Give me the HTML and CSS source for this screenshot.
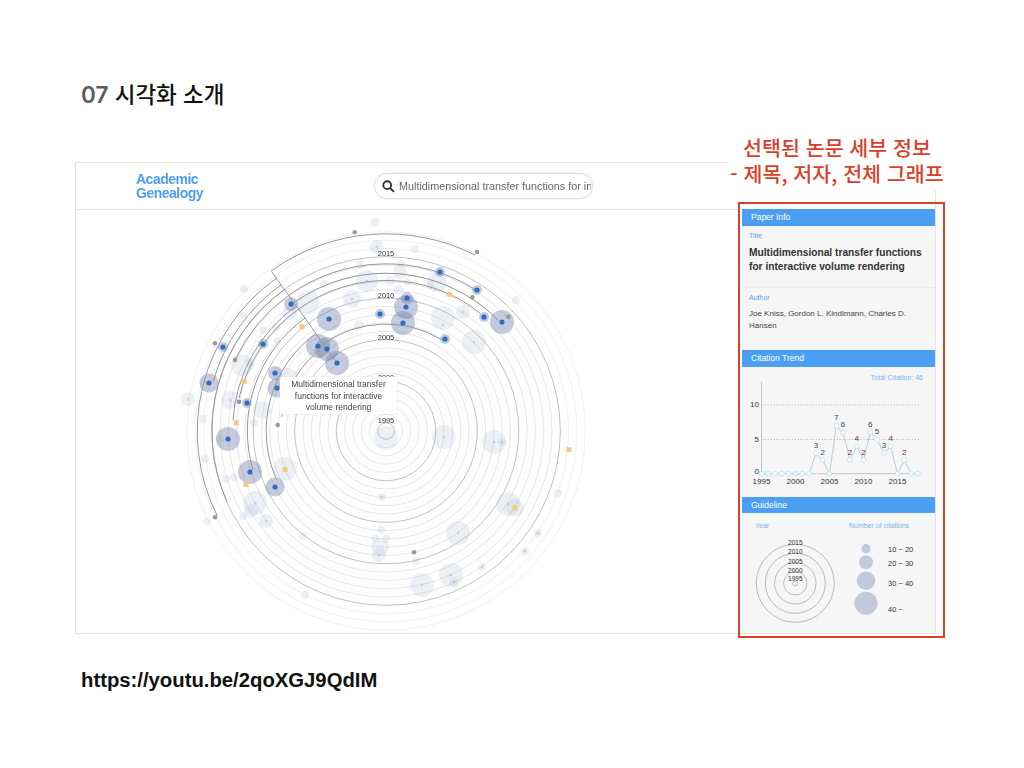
FILE: index.html
```html
<!DOCTYPE html>
<html lang="ko">
<head>
<meta charset="utf-8">
<title>07 시각화 소개</title>
<link rel="stylesheet" href="styles.css">
</head>
<body>
<div class="slide">
  <h1 class="heading"><span class="num">07</span> 시각화 소개</h1>
  <div class="card">
    <div class="left">
      <header class="topbar">
        <div class="logo">Academic<br>Genealogy</div>
        <div class="search">
          <svg class="search-icon" viewBox="0 0 14 14"><circle cx="5.6" cy="5.6" r="4.2"/><path d="M8.8 8.8L12.8 12.8"/></svg>
          <span class="search-text">Multidimensional transfer functions for interactive volume rendering</span>
        </div>
      </header>
      <div class="viz">
        <svg class="viz-svg" viewBox="76 210 664 423" width="664" height="423">
          <g class="ring-faint">
            <circle cx="386" cy="431" r="182.6"/><circle cx="386" cy="431" r="190.9"/><circle cx="386" cy="431" r="199.2"/>
          </g>
          <g class="ring">
            <circle cx="386" cy="431" r="16.6"/><circle cx="386" cy="431" r="24.9"/><circle cx="386" cy="431" r="33.2"/><circle cx="386" cy="431" r="41.5"/>
            <circle cx="386" cy="431" r="58.1"/><circle cx="386" cy="431" r="66.4"/><circle cx="386" cy="431" r="74.7"/><circle cx="386" cy="431" r="83"/>
            <circle cx="386" cy="431" r="99.6"/><circle cx="386" cy="431" r="107.9"/><circle cx="386" cy="431" r="116.2"/><circle cx="386" cy="431" r="124.5"/>
            <circle cx="386" cy="431" r="141.1"/><circle cx="386" cy="431" r="149.4"/><circle cx="386" cy="431" r="157.7"/><circle cx="386" cy="431" r="166"/>
          </g>
          <g class="ring-major">
            <circle cx="386" cy="431" r="8.3"/><circle cx="386" cy="431" r="49.8"/><circle cx="386" cy="431" r="91.3"/><circle cx="386" cy="431" r="132.8"/><circle cx="386" cy="431" r="174.3"/>
          </g>
          <g class="halo-light">
            <circle cx="375" cy="222" r="4.5"/><circle cx="377" cy="247" r="7"/><circle cx="244" cy="289" r="4"/><circle cx="360" cy="265" r="4"/><circle cx="367" cy="281" r="11"/><circle cx="324" cy="284" r="4"/><circle cx="352" cy="299" r="9"/><circle cx="308" cy="302" r="12"/><circle cx="290" cy="313" r="7"/><circle cx="243" cy="315" r="3.5"/><circle cx="263" cy="330" r="4"/><circle cx="276" cy="327" r="4"/><circle cx="359" cy="325" r="5"/><circle cx="277" cy="341" r="3.5"/><circle cx="242" cy="365" r="11"/><circle cx="250" cy="363" r="5"/><circle cx="287" cy="380" r="12"/><circle cx="188" cy="399" r="7"/><circle cx="230" cy="400" r="9"/><circle cx="262" cy="410" r="9"/><circle cx="203" cy="419" r="4"/>
            <circle cx="415" cy="249" r="4"/><circle cx="401" cy="263" r="4"/><circle cx="400" cy="272" r="7"/><circle cx="390" cy="281" r="5"/><circle cx="408" cy="282" r="4"/><circle cx="399" cy="290" r="5"/><circle cx="430" cy="285" r="4"/><circle cx="437" cy="282" r="10"/><circle cx="516" cy="300" r="4"/><circle cx="463" cy="312" r="7"/><circle cx="443" cy="318" r="12"/><circle cx="474" cy="342" r="12"/>
            <circle cx="220" cy="439" r="4"/><circle cx="254" cy="423" r="4"/><circle cx="205" cy="459" r="4"/><circle cx="285" cy="469" r="12"/><circle cx="234" cy="477" r="4"/><circle cx="226" cy="479" r="4"/><circle cx="255" cy="503" r="12"/><circle cx="251" cy="511" r="7"/><circle cx="243" cy="516" r="4"/><circle cx="266" cy="521" r="7"/><circle cx="207" cy="521" r="4"/><circle cx="303" cy="536" r="4"/><circle cx="305" cy="595" r="4"/><circle cx="382" cy="497" r="4"/><circle cx="381" cy="530" r="4"/><circle cx="375" cy="538" r="4"/><circle cx="386" cy="539" r="4"/><circle cx="380" cy="547" r="9"/><circle cx="379" cy="555" r="7"/>
            <circle cx="386" cy="438" r="12"/><circle cx="444" cy="437" r="12"/><circle cx="494" cy="442" r="12"/><circle cx="502" cy="442" r="4"/><circle cx="508" cy="504" r="12"/><circle cx="515" cy="508" r="9"/><circle cx="558" cy="493" r="4"/><circle cx="538" cy="533" r="4"/><circle cx="525" cy="551" r="4"/><circle cx="482" cy="567" r="4"/><circle cx="458" cy="533" r="12"/><circle cx="416" cy="561" r="4"/><circle cx="451" cy="575" r="12"/><circle cx="454" cy="582" r="4.5"/><circle cx="422" cy="585" r="12"/>
          </g>
          <g class="dot-light">
            <circle cx="377" cy="247" r="1.5"/><circle cx="367" cy="281" r="1.5"/><circle cx="352" cy="299" r="1.5"/><circle cx="443" cy="325" r="1.5"/><circle cx="474" cy="342" r="1.5"/><circle cx="463" cy="312" r="1.5"/><circle cx="188" cy="399" r="1.5"/><circle cx="230" cy="400" r="1.5"/><circle cx="255" cy="503" r="1.5"/><circle cx="266" cy="521" r="1.5"/><circle cx="382" cy="497" r="1.5"/><circle cx="444" cy="437" r="1.5"/><circle cx="494" cy="442" r="1.5"/><circle cx="502" cy="442" r="1.5"/><circle cx="508" cy="504" r="1.5"/><circle cx="458" cy="533" r="1.5"/><circle cx="451" cy="575" r="1.5"/><circle cx="454" cy="582" r="1.5"/><circle cx="422" cy="585" r="1.5"/><circle cx="379" cy="555" r="1.5"/><circle cx="538" cy="533" r="1.5"/><circle cx="525" cy="551" r="1.5"/><circle cx="482" cy="567" r="1.5"/>
          </g>
          <g class="halo-dark">
            <circle cx="291" cy="304" r="7"/><circle cx="329" cy="319" r="12"/><circle cx="318" cy="346" r="12"/><circle cx="327" cy="349" r="12"/><circle cx="337" cy="363" r="12"/><circle cx="380" cy="314" r="5"/><circle cx="223" cy="347" r="5"/><circle cx="263" cy="344" r="5"/><circle cx="275" cy="373" r="7"/><circle cx="277" cy="388" r="9.5"/><circle cx="209" cy="383" r="9.5"/><circle cx="247" cy="403" r="5"/>
            <circle cx="440" cy="272" r="5"/><circle cx="477" cy="290" r="5"/><circle cx="407" cy="298" r="6"/><circle cx="406" cy="307" r="12"/><circle cx="403" cy="323" r="12"/><circle cx="484" cy="317" r="5"/><circle cx="502" cy="322" r="12"/><circle cx="445" cy="339" r="5"/>
            <circle cx="228" cy="439" r="12"/><circle cx="250" cy="472" r="12"/><circle cx="275" cy="487" r="9.5"/>
          </g>
          <g class="arc">
            <path d="M271.2 270.9A197 197 0 0 1 475 255"/>
            <path d="M276.5 278.2A188 188 0 0 0 217.3 516"/>
            <path d="M281.1 284.7A180 180 0 0 0 213 382"/>
            <path d="M284.6 289.6A174 174 0 0 0 227 501.7"/>
            <path d="M288.7 295.3A167 167 0 0 0 235 360"/>
            <path d="M296.3 305.8A154 154 0 0 0 233 420"/>
            <path d="M298.6 309.1A150 150 0 0 0 239 398"/>
            <path d="M305 318A139 139 0 0 0 253 470"/>
            <path d="M316 333.5A120 120 0 0 0 276.7 480"/>
            <path d="M324.8 345.7A105 105 0 0 0 281.7 416.7"/>
            <path d="M288.7 295.3A167 167 0 0 1 476 290"/>
            <path d="M294 302.6A158 158 0 0 1 498 320"/>
            <path d="M298.6 309.1A150 150 0 0 1 480 313"/>
            <path d="M323.7 344A107 107 0 0 1 441 339.4"/>
            <path d="M271.7 271.7L337 363"/>
          </g>
          <g class="dot-grey">
            <circle cx="354.7" cy="232.3" r="2.3"/><circle cx="477" cy="252" r="2.3"/><circle cx="215" cy="343.3" r="2.3"/><circle cx="235" cy="360" r="2.3"/><circle cx="239" cy="401.7" r="2.3"/><circle cx="277.7" cy="425" r="2.3"/><circle cx="215" cy="517.3" r="2.3"/><circle cx="472.3" cy="297.3" r="2.3"/><circle cx="508.3" cy="316.7" r="2.3"/><circle cx="414" cy="552.3" r="2.3"/>
          </g>
          <g class="square">
            <rect x="299.5" y="324.2" width="5" height="5"/><rect x="241.8" y="379.2" width="5" height="5"/><rect x="447.2" y="291.8" width="5" height="5"/><rect x="233.8" y="420.2" width="5" height="5"/><rect x="282.5" y="466.8" width="5" height="5"/><rect x="243.5" y="481.8" width="5" height="5"/><rect x="512.5" y="505.2" width="5" height="5"/><rect x="566.5" y="447.2" width="5" height="5"/>
          </g>
          <g class="dot-dark">
            <circle cx="291" cy="304" r="2.6"/><circle cx="329" cy="319" r="2.6"/><circle cx="318" cy="346" r="2.6"/><circle cx="327" cy="349" r="2.6"/><circle cx="337" cy="363" r="2.6"/><circle cx="380" cy="314" r="2.6"/><circle cx="223" cy="347" r="2.6"/><circle cx="263" cy="344" r="2.6"/><circle cx="275" cy="373" r="2.6"/><circle cx="277" cy="388" r="2.6"/><circle cx="209" cy="383" r="2.6"/><circle cx="247" cy="403" r="2.6"/>
            <circle cx="440" cy="272" r="2.6"/><circle cx="477" cy="290" r="2.6"/><circle cx="407" cy="298" r="2.6"/><circle cx="406" cy="307" r="2.6"/><circle cx="403" cy="323" r="2.6"/><circle cx="484" cy="317" r="2.6"/><circle cx="502" cy="322" r="2.6"/><circle cx="445" cy="339" r="2.6"/>
            <circle cx="228" cy="439" r="2.6"/><circle cx="250" cy="472" r="2.6"/><circle cx="275" cy="487" r="2.6"/>
          </g>
          <g class="year">
            <text x="386" y="255.5">2015</text><text x="386" y="297.5">2010</text><text x="386" y="339.5">2005</text><text x="386" y="380">2000</text><text x="386" y="422.5">1995</text>
          </g>
        </svg>
        <div class="tip">Multidimensional transfer functions for interactive volume rendering</div>
      </div>
    </div>
    <aside class="side">
      <div class="bar">Paper Info</div>
      <div class="info info-title">
        <div class="tag">Title</div>
        <div class="paper-title">Multidimensional transfer functions for interactive volume rendering</div>
      </div>
      <div class="info info-author">
        <div class="tag">Author</div>
        <div class="authors">Joe Kniss, Gordon L. Kindlmann, Charles D. Hansen</div>
      </div>
      <div class="bar">Citation Trend</div>
      <svg class="chart" viewBox="742 367 193 130" width="193" height="130">
        <text class="total" x="923" y="380">Total Citation: 46</text>
        <path class="grid" d="M761.5 405H920M761.5 439.5H920"/>
        <path class="axis" d="M761.5 382V473.7H920"/>
        <g class="tick">
          <text x="759" y="406.5">10</text><text x="759" y="441.5">5</text><text x="759" y="474">0</text>
        </g>
        <g class="xtick">
          <text x="761.5" y="484">1995</text><text x="795.5" y="484">2000</text><text x="829.5" y="484">2005</text><text x="863.5" y="484">2010</text><text x="897.5" y="484">2015</text>
        </g>
        <polyline class="line" points="809.1,473.7 815.9,453.2 822.7,460 829.5,473.7 836.3,425.8 843.1,432.6 849.9,460 856.7,446.3 863.5,460 870.3,432.6 877.1,439.5 883.9,453.2 890.7,446.3 897.5,473.7 904.3,460 911.1,473.7 917.9,473.7"/>
        <g class="pt">
          <circle cx="761.5" cy="473.7" r="2.4"/><circle cx="768.3" cy="473.7" r="2.4"/><circle cx="775.1" cy="473.7" r="2.4"/><circle cx="781.9" cy="473.7" r="2.4"/><circle cx="788.7" cy="473.7" r="2.4"/><circle cx="795.5" cy="473.7" r="2.4"/><circle cx="802.3" cy="473.7" r="2.4"/><circle cx="809.1" cy="473.7" r="2.4"/><circle cx="815.9" cy="453.2" r="2.4"/><circle cx="822.7" cy="460" r="2.4"/><circle cx="829.5" cy="473.7" r="2.4"/><circle cx="836.3" cy="425.8" r="2.4"/><circle cx="843.1" cy="432.6" r="2.4"/><circle cx="849.9" cy="460" r="2.4"/><circle cx="856.7" cy="446.3" r="2.4"/><circle cx="863.5" cy="460" r="2.4"/><circle cx="870.3" cy="432.6" r="2.4"/><circle cx="877.1" cy="439.5" r="2.4"/><circle cx="883.9" cy="453.2" r="2.4"/><circle cx="890.7" cy="446.3" r="2.4"/><circle cx="897.5" cy="473.7" r="2.4"/><circle cx="904.3" cy="460" r="2.4"/><circle cx="911.1" cy="473.7" r="2.4"/><circle cx="917.9" cy="473.7" r="2.4"/>
        </g>
        <g class="val">
          <text x="815.9" y="447.5">3</text><text x="822.7" y="454.5">2</text><text x="836.3" y="420">7</text><text x="843.1" y="427">6</text><text x="849.9" y="454.5">2</text><text x="856.7" y="440.5">4</text><text x="863.5" y="454.5">2</text><text x="870.3" y="427">6</text><text x="877.1" y="434">5</text><text x="883.9" y="447.5">3</text><text x="890.7" y="440.5">4</text><text x="904.3" y="454.5">2</text>
        </g>
      </svg>
      <div class="bar bar-guide">Guideline</div>
      <svg class="guide" viewBox="742 513 193 120" width="193" height="120">
        <text class="g-head" x="755" y="528">Year</text>
        <text class="g-head" x="849" y="528">Number of citations</text>
        <g class="g-ring">
          <circle cx="795.3" cy="583.3" r="39"/><circle cx="795.3" cy="583.3" r="30"/><circle cx="795.3" cy="583.3" r="20.7"/><circle cx="795.3" cy="583.3" r="11.7"/><circle cx="795.3" cy="583.3" r="2.5"/>
        </g>
        <g class="g-year">
          <text x="795.3" y="545">2015</text><text x="795.3" y="554">2010</text><text x="795.3" y="563.5">2005</text><text x="795.3" y="572.5">2000</text><text x="795.3" y="581">1995</text>
        </g>
        <g class="g-size">
          <circle cx="866" cy="548.7" r="4.7"/><circle cx="866" cy="562.3" r="7"/><circle cx="866" cy="580.7" r="9.3"/><circle cx="866" cy="603.3" r="11.5"/>
        </g>
        <g class="g-label">
          <text x="888" y="551.5">10 ~ 20</text><text x="888" y="566">20 ~ 30</text><text x="888" y="585.5">30 ~ 40</text><text x="888" y="612">40 ~</text>
        </g>
      </svg>
    </aside>
  </div>
  <p class="url">https://youtu.be/2qoXGJ9QdIM</p>
  <div class="note">선택된 논문 세부 정보<br>- 제목, 저자, 전체 그래프</div>
  <div class="frame"></div>
</div>
</body>
</html>
```
FILE: styles.css
```css
* { box-sizing: border-box; }
html, body { margin: 0; padding: 0; background: #fff; }
.slide {
  position: relative;
  width: 1024px;
  height: 768px;
  padding-top: 76px;
  overflow: hidden;
  font-family: "Liberation Sans", Arial, sans-serif;
}
.heading {
  margin: 0 0 0 81px;
  height: 86px;
  font: 500 22.5px/34px "Noto Sans CJK KR", sans-serif;
  color: #111;
}
.num { font-family: Inter, "Liberation Sans", sans-serif; font-weight: 600; color: #5c5c5c; }

.card {
  display: flex;
  width: 861px;
  height: 472px;
  margin-left: 75px;
  border: 1px solid #e2e2e2;
  border-right: 0;
  filter: blur(0.45px);
}
.left { width: 664px; display: flex; flex-direction: column; }
.topbar {
  display: flex;
  align-items: center;
  height: 47px;
  padding-left: 60px;
  border-bottom: 1px solid #e2e2e2;
}
.logo {
  width: 238px;
  font-size: 14px;
  line-height: 14px;
  font-weight: 700;
  letter-spacing: -0.5px;
  color: #4c9ff2;
}
.search {
  display: flex;
  align-items: center;
  gap: 4px;
  width: 219px;
  height: 26px;
  padding: 0 1px 0 7px;
  border: 1px solid #d3e0ee;
  border-radius: 13px;
  box-shadow: 0 0 2px #dbe7f3;
  overflow: hidden;
}
.search-icon { width: 13px; height: 13px; flex: none; fill: none; stroke: #333; stroke-width: 2; }
.search-text { font-size: 10.8px; color: #666; white-space: nowrap; overflow: hidden; }

.viz { position: relative; height: 423px; }
.viz-svg { display: block; }
.ring circle { fill: none; stroke: #e6e6e6; stroke-width: 1; }
.ring-faint circle { fill: none; stroke: #f0f0f0; stroke-width: 1; }
.ring-major circle { fill: none; stroke: #c0c0c0; stroke-width: 1; }
.halo-light circle { fill: #9fb3cf; fill-opacity: 0.2; }
.dot-light circle { fill: #9fb3cf; fill-opacity: 0.45; }
.halo-dark circle { fill: #5f6f9f; fill-opacity: 0.36; }
.dot-dark circle { fill: #2a6fc4; }
.dot-grey circle { fill: #9a9a9a; }
.square rect { fill: #f3cb80; }
.arc path { fill: none; stroke: #969696; stroke-width: 1; }
.year text { font-size: 7.4px; fill: #333; text-anchor: middle; }
.tip {
  position: absolute;
  left: 204px;
  top: 167px;
  width: 117px;
  height: 37px;
  padding: 2px 6px 0;
  font-size: 8.5px;
  line-height: 11.7px;
  text-align: center;
  color: #444;
  background: #fff;
  border-radius: 2px;
  box-shadow: 0 0 2px #ddd;
}

.side {
  width: 196px;
  padding: 46px 0 0 2px;
  display: flex;
  flex-direction: column;
  background: #fff;
  border-right: 1px solid #e2e2e2;
}
.bar {
  height: 17px;
  padding-left: 9px;
  font-size: 8.5px;
  line-height: 17px;
  color: #fff;
  background: #4b9ff3;
}
.bar-guide { height: 16px; line-height: 16px; }
.info { padding: 5px 7px 0; background: #f6f6f6; }
.info-title { height: 62px; border-bottom: 1px solid #ececec; }
.info-author { height: 62px; }
.tag { font-size: 7px; line-height: 9px; color: #5b9ff0; }
.paper-title { margin-top: 6px; font-size: 10.2px; line-height: 14px; font-weight: 700; color: #333; }
.authors { margin-top: 6px; font-size: 8px; line-height: 11.5px; color: #444; }
.chart, .guide { display: block; background: #f6f6f6; }
.total { font-size: 7px; fill: #7db2f3; text-anchor: end; }
.grid { fill: none; stroke: #aaa; stroke-width: 0.7; stroke-dasharray: 1.5 1.5; }
.axis { fill: none; stroke: #c4c4c4; stroke-width: 1; }
.tick text { font-size: 8px; fill: #333; text-anchor: end; }
.xtick text { font-size: 8px; fill: #333; text-anchor: middle; }
.line { fill: none; stroke: #c8c8c8; stroke-width: 1; }
.pt circle { fill: #fbfdfe; stroke: #bfe6f6; stroke-width: 1; }
.val text { font-size: 8px; fill: #444; text-anchor: middle; }
.g-head { font-size: 7px; fill: #7db2f3; }
.g-ring circle { fill: none; stroke: #aaa; stroke-width: 0.8; }
.g-year text { font-size: 6.5px; fill: #333; text-anchor: middle; }
.g-size circle { fill: #c3c9da; }
.g-label text { font-size: 7.5px; fill: #333; }

.url {
  margin: 34px 0 0 81px;
  font-size: 20.3px;
  line-height: 24px;
  font-weight: 700;
  color: #111;
}
.note {
  position: absolute;
  left: 727px;
  top: 132px;
  width: 220px;
  height: 58px;
  padding-top: 3px;
  background: #fff;
  font: 500 20.6px/25.5px "Noto Sans CJK KR", sans-serif;
  text-align: center;
  color: #d9402a;
}
.frame {
  position: absolute;
  left: 738px;
  top: 202px;
  width: 207px;
  height: 436px;
  border: 2px solid #dc3f2a;
}
```
